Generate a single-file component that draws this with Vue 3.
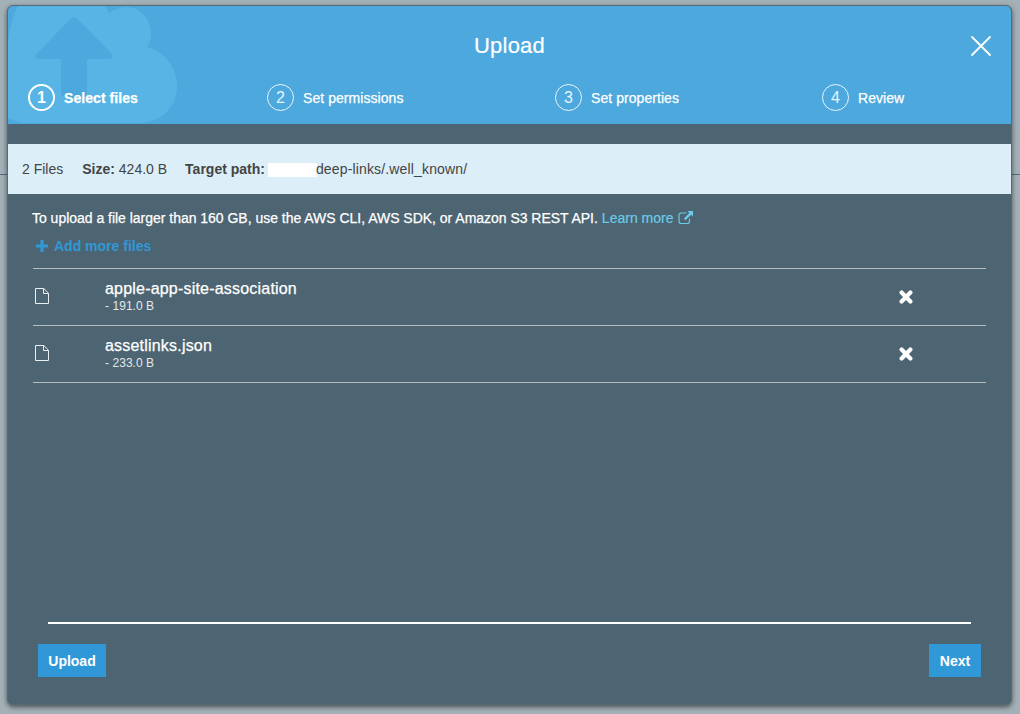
<script setup>
const steps = ['Select files', 'Set permissions', 'Set properties', 'Review']
const files = [
  { name: 'apple-app-site-association', size: '191.0 B' },
  { name: 'assetlinks.json', size: '233.0 B' },
]
</script>

<template>
  <div class="page">
    <div class="modal">
      <header class="header">
        <svg class="cloud" width="180" height="118" viewBox="8 6 180 118">
          <path fill="#57b4e4" d="M8 45C9 29 13 14 18 6H105Q108 10 109 13C117 8 122 7 127 7C140 7 151 19 151 33C151 38 150 43 147 47C164 51 177 67 177 86C177 107 161 123 139 123H27C20 123 14 121 8 118Z" />
          <path fill="#4da8dd" d="M71 18.500Q74 16 77 18.500L111.500 53.500Q115 58 109 59H87V91Q87 98 80 98H68Q61 98 61 91V59H39Q33 58 37 53.500Z" />
        </svg>
        <h1 class="title">Upload</h1>
        <svg class="close" width="24" height="24" viewBox="0 0 24 24">
          <path d="M3 3L21 21M21 3L3 21" fill="none" stroke="#fff" stroke-width="1.800" stroke-linecap="round" />
        </svg>
        <ol class="steps">
          <li v-for="(step, i) in steps" :key="step" class="step" :class="{ active: i === 0 }">
            <span class="num">{{ i + 1 }}</span>
            <span class="label">{{ step }}</span>
          </li>
        </ol>
      </header>

      <div class="summary">
        <span class="count">2 Files</span>
        <span class="size"><b>Size:</b> 424.0 B</span>
        <span><b>Target path:</b></span>
        <span class="mask"></span>
        <span class="path">deep-links/.well_known/</span>
      </div>

      <main class="body">
        <p class="note">
          <span class="note-text">To upload a file larger than 160 GB, use the AWS CLI, AWS SDK, or Amazon S3 REST API.</span>
          <a class="learn">Learn more</a>
          <svg class="ext" width="16" height="14" viewBox="0 0 16 14">
            <path d="M8.500 2H3.200Q1 2 1 4.200V10.300Q1 12.500 3.200 12.500H9.300Q11.500 12.500 11.500 10.300V7.800" fill="none" stroke="#6bcbe8" stroke-width="1.200" />
            <path d="M9.500 0H15V5.500L13.100 3.700L7.500 9.200L5.900 7.600L11.400 2Z" fill="#6bcbe8" />
          </svg>
        </p>
        <a class="add">
          <svg width="13" height="12" viewBox="0 0 13 12">
            <path d="M7 1.500V10.500M2.500 6H11.500" fill="none" stroke="#3198d8" stroke-width="3.200" stroke-linecap="square" />
          </svg>
          <span>Add more files</span>
        </a>
        <ul class="files">
          <li v-for="f in files" :key="f.name" class="file">
            <svg class="doc" width="14" height="16" viewBox="0 0 14 16">
              <path d="M.5 .5H8.800L13.500 5.200V15.500H.5ZM8.500 .5V5.500H13.500" fill="none" stroke="#eceff1" stroke-width="1" stroke-linejoin="round" />
            </svg>
            <div class="info">
              <div class="name">{{ f.name }}</div>
              <div class="bytes">- {{ f.size }}</div>
            </div>
            <svg class="remove" width="14" height="14" viewBox="0 0 14 14">
              <path d="M2.600 2.600L11.400 11.400M11.400 2.600L2.600 11.400" fill="none" stroke="#fff" stroke-width="4.200" stroke-linecap="round" />
            </svg>
          </li>
        </ul>
      </main>

      <footer class="footer">
        <button class="btn upload">Upload</button>
        <button class="btn next">Next</button>
      </footer>
    </div>
  </div>
</template>

<style>
body { margin: 0; overflow: hidden; }
</style>

<style scoped>
* { box-sizing: border-box; }
.page {
  width: 1020px;
  height: 714px;
  padding: 5px 8px 9px 7px;
  background: linear-gradient(#4f6b7b, #4f6b7b) 0 174px / 100% 1px no-repeat, #a3b0b7;
  font-family: "Liberation Sans", Arial, sans-serif;
  font-size: 14px;
  color: #fff;
}
.modal {
  display: flex;
  flex-direction: column;
  width: 1005px;
  height: 700px;
  border: 1px solid #586a74;
  border-radius: 6px;
  background: #4d6472;
  box-shadow: 0 2px 5px rgba(0, 0, 0, 0.55);
  overflow: hidden;
}
.header {
  position: relative;
  flex: none;
  height: 118px;
  background: #4da8dd;
}
.cloud { position: absolute; left: 0; top: 0; }
.title {
  position: relative;
  margin: 0;
  padding-top: 26px;
  font-size: 22px;
  line-height: 27px;
  font-weight: 400;
  text-align: center;
  letter-spacing: 0.2px;
  -webkit-text-stroke: 0.2px #fff;
}
.close { position: absolute; left: 961px; top: 28px; }
.steps {
  position: relative;
  display: grid;
  grid-template-columns: 239px 288px 267px 1fr;
  margin: 25px 0 0;
  padding: 0 0 0 20px;
  list-style: none;
}
.step { display: flex; align-items: center; gap: 9px; height: 27px; }
.label { letter-spacing: 0.06px; -webkit-text-stroke: 0.25px #fff; }
.num {
  width: 27px;
  height: 27px;
  border: 1px solid #eaf6fd;
  border-radius: 50%;
  font-size: 16px;
  line-height: 26px;
  text-align: center;
  color: #e6f4fc;
}
.active { font-weight: 700; }
.active .num { border: 2px solid #fff; line-height: 24px; color: #fff; }
.summary {
  display: flex;
  align-items: center;
  flex: none;
  height: 50px;
  margin-top: 20px;
  padding-left: 14px;
  background: #dceef8;
  color: #444;
}
.count { margin-right: 19px; }
.size { margin-right: 18px; }
.mask { width: 49px; height: 14px; margin: 2px 0 0 3px; background: #fff; }
.path { margin-left: -1px; letter-spacing: 0.15px; }
.body { flex: 1; padding: 0 25px; }
.note { display: flex; margin: 16px 0 0 -1px; line-height: 16px; }
.note-text { letter-spacing: -0.02px; -webkit-text-stroke: 0.25px #fff; }
.learn { margin-left: 4px; color: #6bcbe8; -webkit-text-stroke: 0.2px #6bcbe8; }
.ext { margin: 1px 0 0 5px; }
.add {
  display: flex;
  align-items: center;
  gap: 6px;
  margin: 12px 0 0 2px;
  line-height: 16px;
  font-weight: 700;
  color: #3198d8;
}
.files { margin: 14px 0 0; padding: 0; list-style: none; border-top: 1px solid #b7bcbc; }
.file {
  display: flex;
  align-items: center;
  height: 57px;
  padding: 0 0 1px 2px;
  border-bottom: 1px solid #b7bcbc;
}
.doc { margin-bottom: 1px; }
.info { flex: 1; margin-left: 56px; }
.name {
  font-size: 16px;
  line-height: 18px;
  letter-spacing: 0.2px;
  -webkit-text-stroke: 0.25px #fff;
}
.bytes { padding-top: 1px; font-size: 12px; line-height: 15px; letter-spacing: 0.05px; color: #e3e8ea; }
.remove { margin-right: 73px; }
.footer {
  display: flex;
  justify-content: space-between;
  align-items: flex-start;
  flex: none;
  height: 82px;
  margin: 0 40px;
  border-top: 2px solid #fff;
}
.btn {
  height: 33px;
  margin: 20px -10px 0;
  padding: 0;
  border: 0;
  background: #3198d8;
  color: #fff;
  font: 700 14px "Liberation Sans", Arial, sans-serif;
}
.upload { width: 68px; }
.next { width: 52px; }
</style>
